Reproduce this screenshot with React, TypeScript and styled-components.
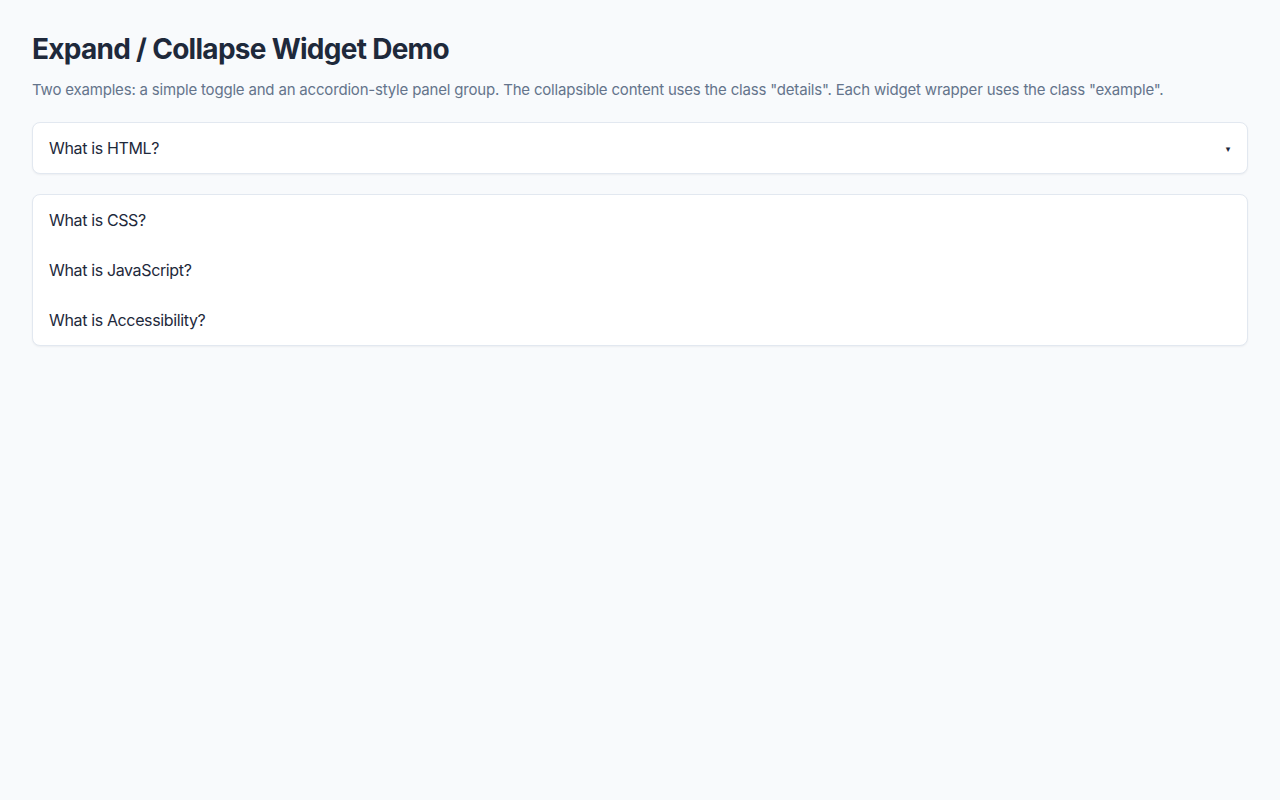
import React, { useState } from 'react'
import styled, { createGlobalStyle } from 'styled-components'

const GlobalStyle = createGlobalStyle`
  html, body {
    margin: 0;
    padding: 0;
    background: #f8fafc;
  }
  body {
    font-family: Inter, "Noto Sans", "Liberation Sans", sans-serif;
    color: #0f172a;
    -webkit-font-smoothing: antialiased;
  }
  * {
    box-sizing: border-box;
  }
`

const Page = styled.main`
  padding: 33px 32px 32px;
  min-height: 800px;
`

const Title = styled.h1`
  margin: 0 0 12px;
  font-size: 28px;
  line-height: 1.2;
  font-weight: 700;
  color: #1e293b;
  letter-spacing: -0.72px;
`

const Lead = styled.p`
  margin: 0 0 22px;
  font-size: 15px;
  line-height: 21px;
  color: #64748b;
  letter-spacing: -0.185px;
`

const Example = styled.section`
  background: #ffffff;
  border: 1px solid #e2e8f0;
  border-radius: 8px;
  box-shadow: 0 1px 2px rgba(15, 23, 42, 0.05);
  overflow: hidden;
  & + & {
    margin-top: 20px;
  }
`

const Summary = styled.button`
  display: flex;
  align-items: center;
  justify-content: space-between;
  width: 100%;
  padding: 13px 16px;
  border: 0;
  background: transparent;
  font: inherit;
  font-size: 16px;
  line-height: 24px;
  letter-spacing: -0.36px;
  color: #1e293b;
  text-align: left;
  cursor: pointer;
`

const Arrow = styled.span<{ $open: boolean }>`
  font-family: "DejaVu Sans", sans-serif;
  font-size: 9px;
  line-height: 1;
  color: #1e293b;
  margin-top: 3px;
  margin-right: 1px;
  transform: rotate(${(p) => (p.$open ? '180deg' : '0deg')});
`

const Details = styled.div`
  padding: 0 16px 14px;
  font-size: 15px;
  line-height: 22px;
  color: #475569;
`

const toggleItem = {
  q: 'What is HTML?',
  a: 'HTML is the markup language used to structure content on the web.',
}

const accordionItems = [
  { q: 'What is CSS?', a: 'CSS describes how HTML elements are presented on screen.' },
  { q: 'What is JavaScript?', a: 'JavaScript adds interactivity and behaviour to web pages.' },
  {
    q: 'What is Accessibility?',
    a: 'Accessibility means building sites that everyone can use, including people with disabilities.',
  },
]

function Toggle() {
  const [open, setOpen] = useState(false)
  return (
    <Example className="example">
      <Summary type="button" aria-expanded={open} onClick={() => setOpen(!open)}>
        <span>{toggleItem.q}</span>
        <Arrow $open={open}>{'▾'}</Arrow>
      </Summary>
      {open && <Details className="details">{toggleItem.a}</Details>}
    </Example>
  )
}

function Accordion() {
  const [openIndex, setOpenIndex] = useState<number | null>(null)
  return (
    <Example className="example">
      {accordionItems.map((item, i) => (
        <div key={item.q}>
          <Summary
            type="button"
            aria-expanded={openIndex === i}
            onClick={() => setOpenIndex(openIndex === i ? null : i)}
          >
            <span>{item.q}</span>
          </Summary>
          {openIndex === i && <Details className="details">{item.a}</Details>}
        </div>
      ))}
    </Example>
  )
}

export default function App() {
  return (
    <>
      <GlobalStyle />
      <Page>
        <Title>Expand / Collapse Widget Demo</Title>
        <Lead>
          Two examples: a simple toggle and an accordion-style panel group. The collapsible content uses the class
          "details". Each widget wrapper uses the class "example".
        </Lead>
        <Toggle />
        <Accordion />
      </Page>
    </>
  )
}
